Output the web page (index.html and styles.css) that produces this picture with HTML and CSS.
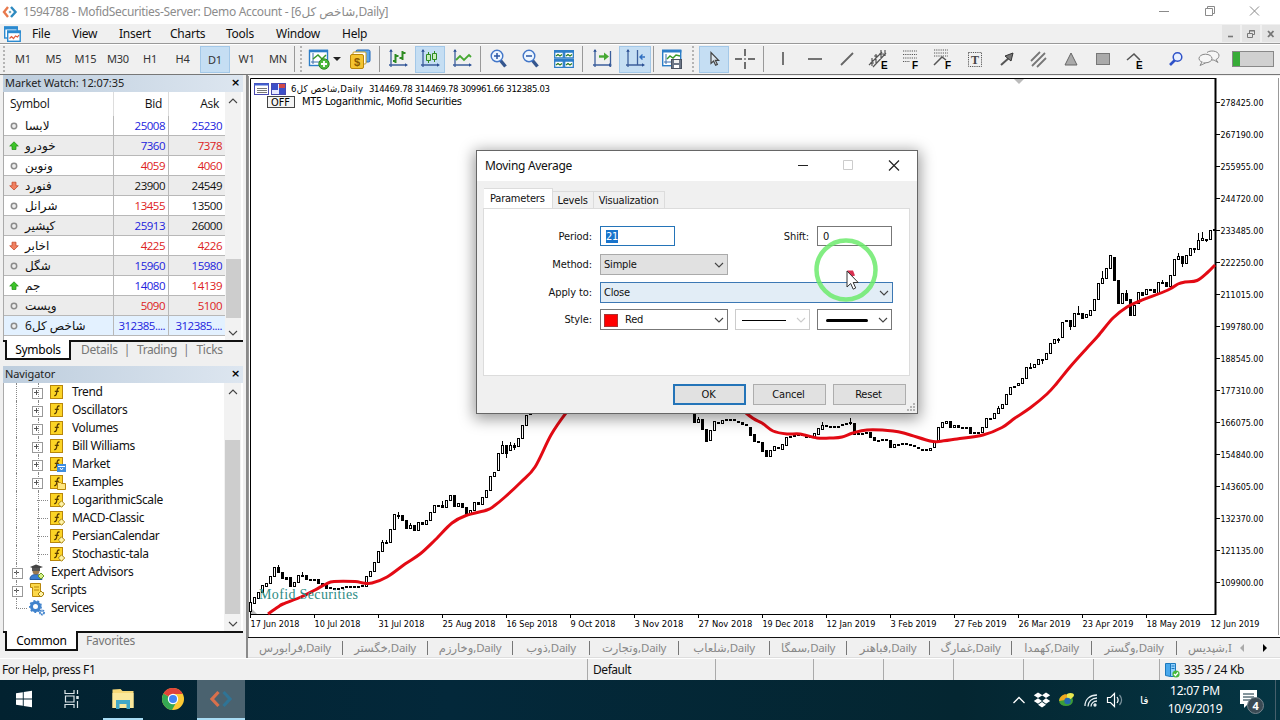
FILE: index.html
```html
<!DOCTYPE html>
<html lang="en">

<head>
    <meta charset="UTF-8">
    <meta name="viewport" content="width=device-width, initial-scale=1.0">
    <title>1594788 - MofidSecurities-Server: Demo Account</title>
    <link rel="stylesheet" href="styles.css">
</head>

<body>
    <!-- shared icons -->
    <svg class="defs" width="0" height="0">
        <symbol id="i-f" viewBox="0 0 16 16">
            <rect x=".5" y="1.5" width="12" height="13" fill="#fcd425" stroke="#b8860b"/>
            <path d="M9.6 4.2C7.6 3.4 7.3 5 7 7s-.5 5-2.8 4.6M4.8 7.3h4" fill="none" stroke="#5a3c00" stroke-width="1.3"/>
        </symbol>
        <symbol id="i-fd" viewBox="0 0 16 16">
            <use href="#i-f"/>
            <path d="M11.5 8.8l3.2 3.2-3.2 3.2L8.300 12z" fill="#fff3a8" stroke="#a88410"/>
        </symbol>
        <symbol id="i-chev" viewBox="0 0 10 10">
            <path d="M1 3l4 4 4-4" fill="none" stroke="currentColor" stroke-width="1.1"/>
        </symbol>
        <symbol id="i-none" viewBox="0 0 10 10">
            <circle cx="5" cy="5" r="2.700" fill="#eee" stroke="#8c8c8c" stroke-width="1.500"/>
        </symbol>
        <symbol id="i-up" viewBox="0 0 10 10">
            <path d="M5 .8L9.300 5H7v3.500H3V5H.7z" fill="#3cc428" stroke="#1c8a12" stroke-width=".7"/>
        </symbol>
        <symbol id="i-down" viewBox="0 0 10 10">
            <path d="M5 9L.7 4.800H3V1.200h4v3.600h2.300z" fill="#f08060" stroke="#c04020" stroke-width=".7"/>
        </symbol>
        <symbol id="i-axes" viewBox="0 0 20 20">
            <path d="M3 1v17M1 16h17" fill="none" stroke="#3c5f9c" stroke-width="1.300"/>
            <path d="M3 0l1.800 2.800H1.200zM20 16l-3 1.800v-3.600z" fill="#2a4f94"/>
        </symbol>
    </svg>

    <div class="titlebar">
        <svg class="logo" width="16" height="12" viewBox="0 0 16 12"><path d="M6 1L2 6l4 5" fill="none" stroke="#e8794c" stroke-width="2.400"/><path d="M9 1l4.500 5L9 11" fill="none" stroke="#2e8ac0" stroke-width="2.400"/><circle cx="8" cy="6" r="1.300" fill="#7ab"/></svg>
        <span class="caption">1594788 - MofidSecurities-Server: Demo Account - [شاخص کل6,Daily]</span>
        <svg class="winctl" width="114" height="16" viewBox="0 0 114 16" fill="none" stroke="#8a8a8a">
            <path d="M5 8.500h10M51.500 5.500h7v7h-7zM53.500 5.500v-2h7v7h-2M96 3.500l9 9M105 3.500l-9 9"/>
        </svg>
    </div>

    <div class="menubar">
        <svg width="17" height="16" viewBox="0 0 17 16"><rect x=".7" y="1" width="12.500" height="11" fill="#fff" stroke="#2b8ad0" stroke-width="1.400"/><path d="M0 2h14" stroke="#2b8ad0" stroke-width="3"/><rect x="3.700" y="5" width="12.500" height="10.300" fill="#fff" stroke="#2b8ad0" stroke-width="1.400"/><path d="M3 6h14" stroke="#2b8ad0" stroke-width="2.400"/><path d="M5.500 12.500l2-2 2 2 2-2.500 2 1 1.500-2" fill="none" stroke="#e05a3a" stroke-width="1.200"/></svg>
        <nav class="menu">
            <span class="m1">File</span><span class="m2">View</span><span class="m3">Insert</span><span class="m4">Charts</span><span class="m5">Tools</span><span class="m6">Window</span><span class="m7">Help</span>
        </nav>
        <div class="mdi">
            <span><svg width="10" height="10" viewBox="0 0 10 10"><path d="M2 7.500h5" stroke="#777" stroke-width="1.600"/></svg></span>
            <span><svg width="10" height="10" viewBox="0 0 10 10" fill="none" stroke="#777"><path d="M1.500 4.500h5v4h-5zM3.500 4V1.500h5v4H7M3 2h6"/></svg></span>
            <span><svg width="10" height="10" viewBox="0 0 10 10"><path d="M2 2l5.500 6M7.500 2L2 8" stroke="#777" stroke-width="1.800"/></svg></span>
        </div>
    </div>

    <div class="toolbar">
        <i class="grip g8"></i>
        <span class="tf w30">M1</span><span class="tf w31">M5</span><span class="tf w33">M15</span><span class="tf w32">M30</span><span class="tf w32">H1</span><span class="tf w33">H4</span><span class="tf w32"><b class="on">D1</b></span><span class="tf w31">W1</span><span class="tf w32">MN</span>
        <i class="sep s2"></i><i class="grip g10"></i>
        <span class="slot w26"><svg width="22" height="22" viewBox="0 0 22 22"><rect x="1.500" y="2.500" width="18" height="15" fill="#fff" stroke="#2c7ec8" stroke-width="1.400"/><path d="M1 3h19" stroke="#2c7ec8" stroke-width="2.600"/><path d="M5 5v11M3 14h14" stroke="#3c6fac"/><path d="M5 11l5-4 4 4 4-4" fill="none" stroke="#389a28" stroke-width="1.500"/><circle cx="16" cy="16" r="5.200" fill="#4cb83c" stroke="#2c8a20"/><path d="M16 13v6M13 16h6" stroke="#fff" stroke-width="1.800"/></svg></span>
        <span class="slot w10"><i class="caret"></i></span>
        <span class="slot w36"><svg width="22" height="22" viewBox="0 0 22 22"><rect x="7" y="2" width="14" height="12" rx="1.500" fill="#5ea6ec" stroke="#1f66b8"/><rect x="4" y="4" width="13" height="12" rx="1" fill="#fff" stroke="#c8a020"/><rect x="1.500" y="6.500" width="13" height="14" rx="1.500" fill="#f4c430" stroke="#b8860b"/><text x="8" y="18" text-anchor="middle" class="dollar">$</text></svg></span>
        <i class="sep s4"></i>
        <span class="slot w32"><svg width="20" height="20" viewBox="0 0 20 20"><use href="#i-axes"/><path d="M7.500 5v9M7.500 12H5M7.500 7h3M14.500 2v9M14.500 4h3M14.500 9h-3" stroke="#2e8b22" stroke-width="2" fill="none"/></svg></span>
        <span class="slot w32 on"><svg width="20" height="20" viewBox="0 0 20 20"><use href="#i-axes"/><path d="M8.500 3v11M14.500 2v11" stroke="#2e8b22"/><path d="M6.500 5.500h4v6h-4zM12.500 4.500h4v6h-4z" fill="#c6efb8" stroke="#2e8b22"/></svg></span>
        <span class="slot w32"><svg width="20" height="20" viewBox="0 0 20 20"><use href="#i-axes"/><path d="M4 11l4-4 4 4 5-5 2 2" fill="none" stroke="#46a832" stroke-width="1.800"/></svg></span>
        <i class="sep s5"></i>
        <span class="slot w32"><svg width="20" height="20" viewBox="0 0 20 20"><path d="M11.500 11.500l5 6" stroke="#35568e" stroke-width="3.400"/><circle cx="8" cy="7" r="5.800" fill="#edf6ff" stroke="#4276c8" stroke-width="1.400"/><path d="M8 4v6M5 7h6" stroke="#2a56a4" stroke-width="1.500"/></svg></span>
        <span class="slot w32"><svg width="20" height="20" viewBox="0 0 20 20"><path d="M11.500 11.500l5 6" stroke="#35568e" stroke-width="3.400"/><circle cx="8" cy="7" r="5.800" fill="#edf6ff" stroke="#4276c8" stroke-width="1.400"/><path d="M5 7h6" stroke="#2a56a4" stroke-width="1.500"/></svg></span>
        <span class="slot w33"><svg width="20" height="20" viewBox="0 0 20 20" fill="#fff" stroke="#2c7ec8" stroke-width="1.300"><path d="M.7 1.700h8.600v7.300H.7zM10.700 1.700h8.600v7.300h-8.600zM.7 10.700h8.600v7.600H.7zM10.700 10.700h8.600v7.600h-8.600z"/><path d="M0 2.500h20M0 11.500h20" stroke-width="2.600"/><path d="M2 7l2-1.500L6 7l2-1.500M12 7l2-1.500L16 7l2-1.500M2 16l2-1.500L6 16l2-1.500M12 16l2-1.500 2 1.500 2-1.500" fill="none" stroke="#287a20" stroke-width="1.200"/></svg></span>
        <i class="sep s6"></i>
        <span class="slot w32"><svg width="20" height="20" viewBox="0 0 20 20"><use href="#i-axes"/><path d="M18.500 2v16" stroke="#3c5f9c" stroke-width="1.300"/><path d="M7 7.500h5" stroke="#46a832" stroke-width="2.400"/><path d="M12 3.500l5 4-5 4z" fill="#46a832"/></svg></span>
        <span class="slot w34 on"><svg width="20" height="20" viewBox="0 0 20 20"><use href="#i-axes"/><path d="M12.500 1v15" stroke="#3c5f9c" stroke-width="1.300"/><path d="M20 8h-5M17.500 5.500L15 8l2.500 2.500" fill="none" stroke="#2f6fc0" stroke-width="1.400"/></svg></span>
        <i class="sep s4"></i>
        <span class="slot w32"><svg width="20" height="20" viewBox="0 0 20 20"><rect x=".7" y="1.700" width="18" height="15" fill="#fff" stroke="#2c7ec8" stroke-width="1.400"/><path d="M0 2h19.400" stroke="#2c7ec8" stroke-width="3"/><path d="M4 5v10M2 13h12" stroke="#3c6fac"/><path d="M5 10l3-3 3 2 3-3 4 1" fill="none" stroke="#389a28" stroke-width="1.400"/><rect x="9.500" y="10.500" width="10" height="9" fill="#6c7686" stroke="#4a5260"/><path d="M12 11h5v3h-5z" fill="#f0f0f0"/><path d="M12 16h5v3h-5z" fill="#fff"/></svg></span>
        <i class="grip g10"></i>
        <span class="slot w32 on"><svg width="20" height="20" viewBox="0 0 20 20"><path d="M7 3.500v11l2.600-2.400 2 4.200 1.800-.9-2-4h3.200z" fill="#dce6ee" stroke="#444" stroke-width="1.200"/></svg></span>
        <span class="slot w30"><svg width="20" height="20" viewBox="0 0 20 20"><path d="M10 0v7M10 13v7M0 10h7M13 10h7M9.300 10h1.400" stroke="#444" stroke-width="1.500"/></svg></span>
        <i class="sep s7"></i>
        <span class="slot w32"><svg width="20" height="20" viewBox="0 0 20 20"><path d="M10 3v13" stroke="#555" stroke-width="1.600"/></svg></span>
        <span class="slot w32"><svg width="20" height="20" viewBox="0 0 20 20"><path d="M3 10h14" stroke="#555" stroke-width="1.600"/></svg></span>
        <span class="slot w32"><svg width="20" height="20" viewBox="0 0 20 20"><path d="M4 16L16 4" stroke="#666" stroke-width="1.800"/></svg></span>
        <span class="slot w32"><svg width="22" height="22" viewBox="0 0 22 22"><path d="M1 17L14 4M5 19L18 5M4 10v8M2 15h4M8 6v9M6 8h4M13 2v9M11 6h5M17 2v6" stroke="#555" stroke-width="1.200" fill="none"/><text x="13" y="21" class="tag">E</text></svg></span>
        <span class="slot w32"><svg width="22" height="22" viewBox="0 0 22 22"><path d="M3 3h14M3 6.500h14M3 10h14M3 13.500h7" stroke="#555" stroke-dasharray="1.200 1" fill="none"/><text x="12" y="21" class="tag">F</text></svg></span>
        <span class="slot w32"><svg width="22" height="22" viewBox="0 0 22 22"><path d="M2 2h14M2 5h14M2 8h14" stroke="#555" stroke-dasharray="1.200 1"/><path d="M2 17l8-8 4 3" fill="none" stroke="#555" stroke-width="1.500"/><text x="13" y="21" class="tag">F</text></svg></span>
        <span class="slot w32"><svg width="20" height="20" viewBox="0 0 20 20"><rect x="3.500" y="3.500" width="13" height="14" fill="none" stroke="#555" stroke-dasharray="1.200 1"/><text x="10" y="15" text-anchor="middle" class="tee">T</text></svg></span>
        <span class="slot w32"><svg width="20" height="20" viewBox="0 0 20 20"><path d="M4 16L13 8" stroke="#555" stroke-width="2"/><path d="M16 4l-2 8-6-5z" fill="#777" stroke="#333"/></svg></span>
        <span class="slot w32"><svg width="20" height="20" viewBox="0 0 20 20"><path d="M2 12L11 3M3 17L16 4M8 18l9-9" stroke="#777" stroke-width="1.800"/></svg></span>
        <span class="slot w32"><svg width="20" height="20" viewBox="0 0 20 20"><path d="M10 4l6 12H4z" fill="#aaa" stroke="#666"/></svg></span>
        <span class="slot w32"><svg width="20" height="20" viewBox="0 0 20 20"><rect x="3.500" y="4.500" width="13" height="11" fill="#aaa" stroke="#777"/></svg></span>
        <span class="slot w32"><svg width="22" height="22" viewBox="0 0 22 22"><path d="M3 12l7-6 6 6" fill="none" stroke="#555" stroke-width="1.600"/><text x="12" y="21" class="tag">E</text></svg></span>
        <span class="slot find"><svg width="20" height="20" viewBox="0 0 20 20"><path d="M4 16l5-5" stroke="#2f52c8" stroke-width="2.600"/><circle cx="11.500" cy="8" r="4.300" fill="#e8f0ff" stroke="#2f52c8" stroke-width="1.500"/></svg></span>
        <span class="slot w34"><svg width="22" height="18" viewBox="0 0 22 18" fill="#f6f6f6" stroke="#888"><path d="M9 2.500c3-2.500 11-2 12 2.500 0 2-1 4-3 4.500l2 3-4-2.500H11"/><ellipse cx="7.500" cy="8.500" rx="6.500" ry="4.300"/><path d="M4 12l-2 3.500L7.500 13"/></svg></span>
        <div class="meter"><i></i></div>
    </div>

    <div class="work">
        <aside class="side">
            <section class="panel watch">
                <header><span>Market Watch: 12:07:35</span><b>×</b></header>
                <div class="panel-body">
                    <table class="quotes">
                        <thead><tr><th class="sym">Symbol</th><th>Bid</th><th>Ask</th></tr></thead>
                        <tbody>
                            <tr><td><svg><use href="#i-none"/></svg><span>لابسا</span></td><td class="up">25008</td><td class="up">25230</td></tr>
                            <tr><td><svg><use href="#i-up"/></svg><span>خودرو</span></td><td class="up">7360</td><td class="dn">7378</td></tr>
                            <tr><td><svg><use href="#i-none"/></svg><span>ونوین</span></td><td class="dn">4059</td><td class="dn">4060</td></tr>
                            <tr><td><svg><use href="#i-down"/></svg><span>فنورد</span></td><td>23900</td><td>24549</td></tr>
                            <tr><td><svg><use href="#i-none"/></svg><span>شرانل</span></td><td class="dn">13455</td><td>13500</td></tr>
                            <tr><td><svg><use href="#i-none"/></svg><span>کپشیر</span></td><td class="up">25913</td><td>26000</td></tr>
                            <tr><td><svg><use href="#i-down"/></svg><span>اخابر</span></td><td class="dn">4225</td><td class="dn">4226</td></tr>
                            <tr><td><svg><use href="#i-none"/></svg><span>شگل</span></td><td class="up">15960</td><td class="up">15980</td></tr>
                            <tr><td><svg><use href="#i-up"/></svg><span>جم</span></td><td class="up">14080</td><td class="dn">14139</td></tr>
                            <tr><td><svg><use href="#i-none"/></svg><span>وپست</span></td><td class="dn">5090</td><td class="dn">5100</td></tr>
                            <tr class="sel"><td><svg><use href="#i-none"/></svg><span>شاخص کل6</span></td><td class="up">312385....</td><td class="up">312385....</td></tr>
                        </tbody>
                    </table>
                    <div class="scroll s-watch"><svg class="flip"><use href="#i-chev"/></svg><i></i><svg><use href="#i-chev"/></svg></div>
                </div>
                <div class="tabs"><span class="cur">Symbols</span><span class="t1">Details</span><span class="bar">Trading</span><span class="bar">Ticks</span></div>
            </section>

            <section class="panel nav">
                <header><span>Navigator</span><b>×</b></header>
                <div class="panel-body">
                    <ul class="tree">
                        <li class="kid plus"><svg><use href="#i-f"/></svg>Trend</li>
                        <li class="kid plus"><svg><use href="#i-f"/></svg>Oscillators</li>
                        <li class="kid plus"><svg><use href="#i-f"/></svg>Volumes</li>
                        <li class="kid plus"><svg><use href="#i-f"/></svg>Bill Williams</li>
                        <li class="kid plus"><svg viewBox="0 0 16 16"><use href="#i-f"/><path d="M7 8h9v8H7z" fill="#3f8ee0"/><path d="M8 10.500h7M10 12l1.500 2 1.500-2" fill="none" stroke="#fff"/></svg>Market</li>
                        <li class="kid plus"><svg viewBox="0 0 16 16"><use href="#i-f"/><path d="M7.500 8.500h3l1 1h4v6h-8z" fill="#ffe680" stroke="#b8860b"/></svg>Examples</li>
                        <li class="kid"><svg><use href="#i-fd"/></svg>LogarithmicScale</li>
                        <li class="kid"><svg><use href="#i-fd"/></svg>MACD-Classic</li>
                        <li class="kid"><svg><use href="#i-fd"/></svg>PersianCalendar</li>
                        <li class="kid last"><svg><use href="#i-fd"/></svg>Stochastic-tala</li>
                        <li class="top plus"><svg viewBox="0 0 16 16"><path d="M1 15.500c0-4 3-5 6-5s6 1 6 5z" fill="#3a7cd0" stroke="#245a9c"/><circle cx="7" cy="7" r="3.500" fill="#9a7a50"/><path d="M7 .5l7 2.500-7 2.500L1 3z" fill="#444"/><path d="M3 4h8v3H3z" fill="#555"/><path d="M12 9l3 3-3 3-3-3z" fill="#d8f088" stroke="#6a9a20"/></svg>Expert Advisors</li>
                        <li class="top plus"><svg viewBox="0 0 16 16"><path d="M1.500 1.500h10v9h3c0 3-1 4-3 4h-8v-9h-2z" fill="#fcd84a" stroke="#b8860b"/><path d="M5 5h5M5 8h5" stroke="#b8860b"/><path d="M12 9l3 3-3 3-3-3z" fill="#fff3a8" stroke="#a88410"/></svg>Scripts</li>
                        <li class="top last"><svg viewBox="0 0 16 16"><circle cx="6.500" cy="6.500" r="4" fill="none" stroke="#3f82cc" stroke-width="3"/><circle cx="6.500" cy="6.500" r="5.700" fill="none" stroke="#3f82cc" stroke-width="1.500" stroke-dasharray="2 2"/><circle cx="13" cy="12.500" r="2" fill="none" stroke="#3f82cc" stroke-width="2" stroke-dasharray="1.600 .6"/></svg>Services</li>
                    </ul>
                    <div class="scroll s-nav"><svg class="flip"><use href="#i-chev"/></svg><i></i><svg><use href="#i-chev"/></svg></div>
                </div>
                <div class="tabs"><span class="cur wide">Common</span><span class="t2">Favorites</span></div>
            </section>
        </aside>

        <main class="main">
            <svg id="chart" width="1032" height="561" viewBox="248 76 1032 561">
                <rect x="248" y="76" width="1032" height="561" fill="#fff"/>
                <path d="M248.500 76v561M1278.500 78v557" stroke="#999"/>
                <path d="M250.500 614V78.500H1216M250 614.500h966" fill="none" stroke="#000"/>
                <path d="M1215.500 78v537" stroke="#000" stroke-width="2"/>
                <path d="M1014 79h10l-5 5z" fill="#bbb"/>
                <path d="M251 608l6 6h-6z" fill="#bbb"/>
                <g id="candles"></g>
                <path id="average" fill="none" stroke="#e30a14" stroke-width="3"/>
                <text class="brand" x="259" y="599" textLength="99">Mofid Securities</text>
                <g id="axis"></g>
                <g>
                    <rect x="254.500" y="83.500" width="14" height="11" fill="#fff" stroke="#4848b0"/>
                    <path d="M254 84.500h15" stroke="#4060d0" stroke-width="2"/>
                    <path d="M257 88.500h10M257 90.500h10M257 92.500h10" stroke="#777"/>
                    <rect x="271.500" y="83.500" width="14" height="11" fill="#e8e8ff" stroke="#4848b0"/>
                    <path d="M272 84h6v6h-6zM279 88h6v6h-6z" fill="#3c50c8"/>
                    <path d="M279 84h6v4h-6z" fill="#d04848"/>
                </g>
                <text class="ohlc" x="291" y="92" textLength="72">شاخص کل6,Daily</text>
                <text class="ohlc" x="369" y="92" textLength="181">314469.78 314469.78 309961.66 312385.03</text>
                <rect x="267.500" y="96.500" width="27" height="11" fill="#f4f4f4" stroke="#444"/>
                <text class="note" x="271" y="106" textLength="19" lengthAdjust="spacingAndGlyphs">OFF</text>
                <text class="note" x="302" y="105" textLength="160">MT5 Logarithmic, Mofid Securities</text>
            </svg>
            <div class="doctabs">
                <span class="d1">فرابورس,Daily</span><span class="d2">خگستر,Daily</span><span class="d3">وخارزم,Daily</span><span class="d4">ذوب,Daily</span><span class="d5">وتجارت,Daily</span><span class="d6">شلعاب,Daily</span><span class="d7">سمگا,Daily</span><span class="d8">فباهنر,Daily</span><span class="d9">غمارگ,Daily</span><span class="d10">کهمدا,Daily</span><span class="d11">وگستر,Daily</span><span class="d12">شپدیس,I</span>
                <i class="arr off"></i><i class="arr"></i>
            </div>
        </main>
    </div>

    <div class="statusbar">
        <span class="help">For Help, press F1</span><span class="profile">Default</span><span class="c1"></span><span class="c2"></span><span class="c2"></span><span class="c2"></span><span class="c2"></span><span class="c3"></span>
        <span class="net"><svg width="16" height="16" viewBox="0 0 16 16"><path d="M1.500 1.500h5v13l-5-1z" fill="#48a8ec" stroke="#1c78bc"/><path d="M6.500 1.500h5v13h-5z" fill="#8fd0ff" stroke="#1c78bc"/><path d="M7.500 4h3M7.500 6.500h3" stroke="#1c78bc"/><circle cx="12" cy="12" r="3.600" fill="#48b83c"/><path d="M10 12l1.500 1.500 2.500-3" fill="none" stroke="#fff" stroke-width="1.200"/></svg>335 / 24 Kb</span>
    </div>

    <div class="taskbar">
        <span class="app"><svg width="18" height="18" viewBox="0 0 18 18" fill="#fff"><path d="M1 3.200l6.800-1v6.300H1zM8.700 2L17 .8v7.700H8.700zM1 9.500h6.800v6.300L1 14.800zM8.700 9.500H17v7.700L8.700 16z"/></svg></span>
        <span class="app"><svg width="18" height="18" viewBox="0 0 18 18" fill="none" stroke="#dde6ea" stroke-width="1.200"><path d="M2 0v3.500h9V0M2 18v-3.500h9V18M2.500 6h8.500v6H2.500zM14.500 0v4M14.500 11v7"/><path d="M14.500 6v3" stroke-width="2.500"/></svg></span>
        <span class="app run"><svg width="24" height="24" viewBox="0 0 24 24"><path d="M1.500 2.500l8-.5 2 2h11v17h-21z" fill="#f6d878"/><path d="M1.500 6h21v15h-21z" fill="#fbe89c"/><path d="M5 13h14v9h-3.500v-5h-7v5H5z" fill="#42a8c8"/></svg></span>
        <span class="app"><svg width="24" height="24" viewBox="0 0 24 24"><circle cx="12" cy="12" r="11" fill="#fcc934"/><path d="M12 12L2.500 6.500A11 11 0 0 0 11 23l5-9z" fill="#34a853"/><path d="M12 12L2.500 6.500A11 11 0 0 1 21.700 7H12z" fill="#e0443a"/><circle cx="12" cy="12" r="5.200" fill="#fff"/><circle cx="12" cy="12" r="4" fill="#4285f4"/></svg></span>
        <span class="app active"><svg width="24" height="18" viewBox="0 0 24 18" fill="none" stroke-width="3.200"><path d="M9.500 2L3 9l6.500 7" stroke="#d8704c"/><path d="M14.500 2L21 9l-6.500 7" stroke="#2f7496"/></svg></span>
        <div class="tray">
            <svg width="14" height="10" viewBox="0 0 14 10"><path d="M1.500 8L7 2.500 12.500 8" fill="none" stroke="#fff" stroke-width="1.300"/></svg>
            <svg width="18" height="16" viewBox="0 0 18 16" fill="#fff"><path d="M5 .5L9.500 3.300 5 6 .8 3.300zM13 .5l4.200 2.800L13 6 9 3.300zM5 6.300L9 9l-4 2.800L.8 9zM13 6.300L17.200 9 13 11.800 9.200 9zM9 10l4 2.800L9 15.500l-4-2.700z"/></svg>
            <svg width="18" height="16" viewBox="0 0 18 16"><ellipse cx="8" cy="8.500" rx="7" ry="5.500" fill="#3c9c38"/><path d="M1 9c1-6 6-8 10-6L7 8z" fill="#f0a820"/><path d="M9 2c3-2 7-1 7 1s-4 5-7 5z" fill="#e8e850"/><circle cx="9.500" cy="9" r="3.200" fill="#2468b0"/></svg>
            <svg width="16" height="16" viewBox="0 0 16 16" fill="none" stroke="#e6eef2" stroke-width="1.300"><path d="M2 14C2 7 7 3 14 3M5 14.500c0-5 4-8.500 9-8.500M8 14.500c0-3 2.500-5.500 6-5.500"/><circle cx="12" cy="13" r="1" fill="#fff"/></svg>
            <svg width="18" height="16" viewBox="0 0 18 16" fill="none" stroke="#fff" stroke-width="1.200"><path d="M1.500 5.500h3l4-4v13l-4-4h-3z"/><path d="M11 5c1.500 2 1.500 4 0 6"/><path d="M13.500 3c2.500 3 2.500 7 0 10" stroke="#7c929c"/></svg>
            <span class="lang">فا</span>
            <span class="clock">12:07 PM<br>10/9/2019</span>
            <svg class="notes" width="28" height="28" viewBox="0 0 28 28"><path d="M3 4h17v14h-9l-4 4v-4H3z" fill="#fff"/><path d="M6 8h11M6 11h11M6 14h7" stroke="#0a2a38"/><circle cx="18.500" cy="19.500" r="8" fill="#3a4a54" stroke="#76858e"/><text x="18.500" y="24" text-anchor="middle" class="badge">4</text></svg>
            <i class="peek"></i>
        </div>
    </div>

    <div class="dialog">
        <div class="dlg-title"><span>Moving Average</span>
            <svg width="114" height="16" viewBox="0 0 114 16" fill="none"><path d="M2 7.500h10M93 2.500l10 10M103 2.500l-10 10" stroke="#222" stroke-width="1.200"/><path d="M47.500 2.500h9v9h-9z" stroke="#ccc"/></svg>
        </div>
        <div class="dlg-tabs"><span class="cur">Parameters</span><span>Levels</span><span>Visualization</span></div>
        <div class="page">
            <div class="row r1"><label>Period:</label><div class="input focus"><mark>21</mark></div><label class="shift">Shift:</label><div class="input">0</div></div>
            <div class="row r2"><label>Method:</label><div class="combo gray w127">Simple<svg><use href="#i-chev"/></svg></div></div>
            <div class="row r3"><label>Apply to:</label><div class="combo hot">Close<svg><use href="#i-chev"/></svg></div></div>
            <div class="row r4"><label>Style:</label><div class="combo w127"><i class="swatch"></i>Red<svg><use href="#i-chev"/></svg></div><div class="combo dim w75"><i class="line"></i><svg><use href="#i-chev"/></svg></div><div class="combo w75 end"><i class="line fat"></i><svg><use href="#i-chev"/></svg></div></div>
        </div>
        <div class="dlg-btns"><span class="ok">OK</span><span>Cancel</span><span>Reset</span></div>
        <svg class="sizer" width="9" height="9" viewBox="0 0 9 9"><path d="M6 1h2M3 4h2M6 4h2M0 7h2M3 7h2M6 7h2" stroke="#b4b4b4" stroke-width="2"/></svg>
    </div>

    <svg class="pointer" width="66" height="66" viewBox="0 0 66 66">
        <circle cx="33" cy="33" r="29.500" fill="none" stroke="#6cea6c" stroke-opacity=".85" stroke-width="4.500"/>
        <path d="M34 33.500h6l2 5-3 1z" fill="#d83050"/>
        <path d="M34 34v16l3.700-3.500 2.500 5.700 2.500-1.200-2.500-5.500h5z" fill="#fff" stroke="#333"/>
    </svg>

    <script src="script.js"></script>
</body>

</html>
```

FILE: styles.css
```css
* {
    box-sizing: border-box;
}

body {
    margin: 0;
    width: 1280px;
    height: 720px;
    overflow: hidden;
    background: #f0f0f0;
    color: #111;
    font: 12px/16px "Noto Sans", "DejaVu Sans", sans-serif;
    letter-spacing: -0.25px;
}

svg {
    display: block;
    flex: none;
}

.defs {
    position: absolute;
}

/* title bar and menu */
.titlebar {
    display: flex;
    align-items: center;
    height: 24px;
    padding: 0 12px 0 2px;
    background: #fff;
    color: #8c8c8c;
}

.caption {
    margin-left: 5px;
    letter-spacing: -0.34px;
    white-space: nowrap;
}

.winctl {
    margin-left: auto;
    margin-top: -3px;
}

.menubar {
    display: flex;
    align-items: center;
    height: 19px;
    padding-left: 4px;
}

.menu {
    display: flex;
    padding-left: 11px;
}

.m1 { width: 40px; }
.m2 { width: 47px; }
.m3 { width: 51px; }
.m4 { width: 56px; }
.m5 { width: 50px; }
.m6 { width: 66px; }

.mdi {
    display: flex;
    gap: 2px;
    margin-left: auto;
}

.mdi span {
    display: flex;
    align-items: center;
    justify-content: center;
    width: 18px;
    height: 17px;
    background: #e4e4e4;
}

/* toolbar */
.toolbar {
    display: flex;
    align-items: center;
    height: 32px;
    border-top: 1px solid #999;
    border-bottom: 1px solid #777;
    box-shadow: inset 0 1px #fff;
}

.grip,
.sep {
    flex: none;
    height: 26px;
}

.grip {
    background: linear-gradient(90deg, transparent calc(50% - 1px), #b4b4b4 calc(50% - 1px), #b4b4b4 calc(50% + 1px), transparent calc(50% + 1px));
    -webkit-mask: repeating-linear-gradient(#000 0 2px, transparent 2px 4px);
}

.sep {
    background: linear-gradient(90deg, transparent calc(50% - .5px), #999 calc(50% - .5px), #999 calc(50% + .5px), transparent calc(50% + .5px));
}

.g8 { width: 8px; }
.g10 { width: 10px; }
.s2 { width: 2px; }
.s4 { width: 4px; }
.s5 { width: 5px; }
.s6 { width: 6px; }
.s7 { width: 7px; }

.tf,
.slot {
    display: flex;
    flex: none;
    align-items: center;
    justify-content: center;
    height: 27px;
}

.tf {
    font-size: 11px;
    color: #333;
}

.tf b {
    width: 30px;
    font-weight: normal;
    line-height: 25px;
    text-align: center;
}

.tf .on,
.slot.on {
    background: #c5def3;
    border: 1px solid #a3c8e8;
}

.slot.on {
    margin: 0 1px;
}

.w10 { width: 10px; }
.w26 { width: 26px; }
.w30 { width: 30px; }
.w31 { width: 31px; }
.w32 { width: 32px; }
.w33 { width: 33px; }
.w34 { width: 34px; }
.w36 { width: 36px; }
.w32.on { width: 30px; }
.w34.on { width: 32px; }

.find {
    width: 32px;
    margin-left: 9px;
}

.caret {
    border: 4px solid transparent;
    border-top-color: #222;
    border-bottom: 0;
}

.dollar {
    font: bold 11px "Liberation Sans", sans-serif;
    fill: #8a5a00;
}

.tag {
    font: bold 10px "Liberation Sans", sans-serif;
}

.tee {
    font: bold 12px "Liberation Serif", serif;
    fill: #444;
}

.meter {
    width: 42px;
    height: 16px;
    margin-left: 6px;
    border: 1px solid #888;
    background: #d0d0d0;
}

.meter i {
    display: block;
    width: 7px;
    height: 100%;
    background: #38ac38;
}

/* side panels */
.work {
    display: flex;
    height: 583px;
}

.side {
    width: 248px;
    padding: 0 3px 0 3px;
    border-right: 2px solid #8a8a8a;
}

.panel header {
    display: flex;
    align-items: center;
    justify-content: space-between;
    height: 17px;
    padding: 0 3px 1px 2px;
    background: linear-gradient(90deg, #bdcddd, #dde6f0);
    font-size: 11px;
    letter-spacing: -0.1px;
    color: #222;
}

.panel header b {
    font: bold 11px/12px "DejaVu Sans", sans-serif;
    color: #000;
}

.panel-body {
    display: flex;
    justify-content: space-between;
    height: 248px;
    border-left: 1px solid #aaa;
    background: #fff;
}

.nav {
    margin-top: 7px;
}

.quotes,
.quotes thead,
.quotes tbody {
    display: block;
    width: 221px;
}

.quotes {
    font-family: "Open Sans", "DejaVu Sans", sans-serif;
    letter-spacing: -0.3px;
}

.quotes tr {
    display: grid;
    grid-template-columns: 110px 55px 56px;
    height: 20px;
}

.quotes thead tr {
    height: 24px;
}

.quotes th {
    padding: 0 6px 0 0;
    border-right: 1px solid #ddd;
    font-weight: normal;
    line-height: 24px;
    text-align: right;
}

.quotes .sym {
    padding-left: 6px;
    text-align: left;
}

.quotes td {
    height: 20px;
    padding: 0 3px 0 0;
    border-right: 1px solid #b8b8b8;
    border-bottom: 1px solid #b8b8b8;
    font-size: 11.5px;
    letter-spacing: -0.5px;
    line-height: 19px;
    text-align: right;
}

.quotes th:last-child,
.quotes td:last-child {
    border-right: 0;
}

.quotes td:first-child {
    display: flex;
    align-items: center;
    padding-left: 5px;
    font-size: 12px;
    letter-spacing: 0;
}

.quotes td svg {
    width: 10px;
    height: 10px;
    margin-right: 6px;
}

.quotes tbody tr:nth-child(even) {
    background: #ececec;
}

.quotes .sel {
    background: #e3f1ff;
}

.up { color: #2222dd; }
.dn { color: #dd2222; }

.scroll {
    display: flex;
    flex-direction: column;
    align-items: center;
    width: 17px;
    margin-right: 2px;
    padding: 4px 0 2px;
    background: #f2f2f2;
    color: #444;
}

.scroll svg {
    width: 10px;
    height: 10px;
}

.scroll i {
    width: 15px;
    background: #cdcdcd;
}

.flip {
    transform: scaleY(-1);
}

.s-watch i {
    height: 59px;
    margin: 153px 0 auto;
}

.s-nav i {
    height: 174px;
    margin: 43px 0 auto;
}

.tabs {
    display: flex;
    height: 19px;
    border-top: 2px solid #111;
    color: #777;
    line-height: 16px;
}

.tabs span {
    flex: none;
    white-space: nowrap;
}

.tabs .cur {
    width: 66px;
    height: 20px;
    margin: -2px 0 0 2px;
    border: 2px solid #111;
    border-top: 0;
    background: #fff;
    color: #000;
    line-height: 20px;
    text-align: center;
}

.tabs .cur.wide {
    width: 73px;
}

.t1 { margin-left: 10px; }
.t2 { margin-left: 8px; }

.t1 + .bar {
    letter-spacing: -0.4px;
}

.bar::before {
    content: "|";
    margin: 0 7px 0 6px;
}

.tree {
    margin: 0;
    padding: 0;
    width: 215px;
    list-style: none;
    letter-spacing: -0.35px;
}

.tree li {
    display: flex;
    align-items: center;
    height: 18px;
    position: relative;
    white-space: nowrap;
}

.tree svg {
    width: 16px;
    height: 16px;
    margin-right: 6px;
}

.kid { padding-left: 46px; }
.top { padding-left: 25px; }

/* dotted connectors of the tree */
.kid::before,
.top::before {
    content: "";
    position: absolute;
    left: 12px;
    top: 0;
    width: 21px;
    height: 18px;
    border-left: 1px dotted #888;
    border-right: 1px dotted #888;
}

.kid::after,
.top::after {
    content: "";
    position: absolute;
    left: 33px;
    top: 9px;
    width: 11px;
    border-top: 1px dotted #888;
}

.top::before {
    border-right: 0;
}

.top::after {
    left: 12px;
}

.top.last::before {
    height: 9px;
}

.tree .plus {
    background: linear-gradient(#555, #555) 30px 9px / 5px 1px no-repeat, linear-gradient(#555, #555) 32px 7px / 1px 5px no-repeat;
}

.plus::after {
    left: 28px;
    top: 5px;
    width: 9px;
    height: 9px;
    border: 1px solid #999;
}

.tree .top.plus {
    background-position: 10px 9px, 12px 7px;
}

.top.plus::after {
    left: 8px;
}

/* chart */
.main {
    width: 1032px;
    padding-top: 1px;
}

.ax,
.ohlc {
    font: 9.5px "DejaVu Sans Condensed", "DejaVu Sans", sans-serif;
    letter-spacing: 0;
}

.note {
    font: 11px "DejaVu Sans Condensed", "DejaVu Sans", sans-serif;
    letter-spacing: 0;
}

.brand {
    font: 14px "Liberation Serif", serif;
    letter-spacing: 0;
    fill: #2c8c84;
}

.doctabs {
    display: flex;
    align-items: center;
    height: 21px;
    border-top: 1px solid #111;
    border-bottom: 1px solid #ddd;
    color: #888;
    font-size: 11.5px;
    letter-spacing: -0.35px;
    white-space: nowrap;
}

.doctabs span {
    flex: none;
    height: 14px;
    border-right: 1px solid #777;
    line-height: 14px;
    text-align: center;
}

.d1 { width: 95px; }
.d2 { width: 85px; }
.d3 { width: 85px; }
.d4 { width: 77px; }
.d5 { width: 89px; }
.d6 { width: 91px; }
.d7 { width: 77px; }
.d8 { width: 83px; }
.d9 { width: 82px; }
.d10 { width: 80px; }
.d11 { width: 85px; }

.doctabs .d12 {
    width: 54px;
    padding-left: 11px;
    border: 0;
    text-align: left;
}

.arr {
    margin-left: 19px;
    border: 4px solid transparent;
    border-left-color: #000;
    border-right: 0;
}

.arr.off {
    margin-left: 9px;
    border-left: 0;
    border-right: 4px solid #aaa;
}

/* status bar */
.statusbar {
    display: flex;
    align-items: center;
    height: 22px;
    border-top: 1px solid #fff;
}

.statusbar span {
    flex: none;
    height: 21px;
    line-height: 22px;
    border-right: 1px solid #aaa;
}

.statusbar .help {
    width: 588px;
    padding-left: 2px;
    letter-spacing: -0.4px;
}

.profile {
    width: 128px;
    padding-left: 5px;
    letter-spacing: -0.45px;
}

.c1 { width: 98px; }
.c2 { width: 70px; }
.c3 { width: 66px; }

.statusbar .net {
    display: flex;
    align-items: center;
    gap: 4px;
    padding-left: 4px;
    border: 0;
}

/* taskbar */
.taskbar {
    display: flex;
    height: 40px;
    background: linear-gradient(90deg, #022230, #03283a 35%, #042631 75%, #053543);
}

.app {
    display: flex;
    align-items: center;
    justify-content: center;
    width: 48px;
    border-bottom: 2px solid transparent;
}

.run {
    position: relative;
    width: 53px;
}

.run::after {
    content: "";
    position: absolute;
    bottom: -2px;
    width: 40px;
    height: 2px;
    background: #a8dcf4;
}

.active {
    background: #4a626f;
    border-color: #a8dcf4;
}

.tray {
    display: flex;
    align-items: center;
    margin-left: auto;
    color: #fff;
}

.tray svg {
    margin-right: 7px;
}

.lang {
    width: 27px;
    margin-left: 3px;
    padding-left: 6px;
    font-size: 11px;
}

.clock {
    width: 66px;
    margin: 0 9px 0 1px;
    line-height: 18px;
    text-align: center;
}

.tray .notes {
    margin-right: 10px;
}

.badge {
    font: bold 11px "Noto Sans", sans-serif;
    fill: #fff;
}

.peek {
    width: 5px;
    height: 40px;
    border-left: 1px solid #46606c;
}

/* indicator settings window */
.dialog {
    position: absolute;
    left: 476px;
    top: 150px;
    width: 442px;
    height: 264px;
    border: 1px solid #666;
    background: #f0f0f0;
    box-shadow: 0 3px 14px 2px rgba(0, 0, 0, .4);
    font: 11px/14px "DejaVu Sans Condensed", "DejaVu Sans", sans-serif;
    letter-spacing: -0.2px;
}

.dlg-title {
    display: flex;
    align-items: center;
    justify-content: space-between;
    height: 30px;
    padding: 0 7px 0 8px;
    background: #fff;
    font: 12px/16px "Noto Sans", sans-serif;
    letter-spacing: -0.3px;
}

.dlg-tabs {
    display: flex;
    align-items: flex-end;
    height: 27px;
    padding-left: 7px;
}

.dlg-tabs span {
    height: 17px;
    padding: 2px 5px 0;
    border: 1px solid #dcdcdc;
    border-left: 0;
    border-bottom: 0;
    white-space: nowrap;
}

.dlg-tabs .cur {
    height: 20px;
    padding: 3px 7px 0 6px;
    background: #fff;
}

.page {
    width: 427px;
    height: 168px;
    margin-left: 6px;
    padding-top: 17px;
    border: 1px solid #dcdcdc;
    background: #fff;
}

.row {
    display: flex;
    align-items: center;
    height: 21px;
    margin-bottom: 7px;
}

.row label {
    width: 108px;
    margin-right: 8px;
    letter-spacing: -0.1px;
    text-align: right;
}

.r1 { height: 20px; margin-bottom: 8px; }
.r3 { margin-bottom: 6px; }

.r1 label {
    padding-top: 2px;
}

.row .shift {
    width: 134px;
}

.input {
    width: 75px;
    height: 20px;
    padding: 3px 5px;
    border: 1px solid #777;
}

.focus {
    border-color: #2474b8;
}

.input mark {
    background: #1874cc;
    color: #fff;
}

.combo {
    display: flex;
    align-items: center;
    width: 293px;
    height: 21px;
    padding: 1px 3px 0;
    border: 1px solid #777;
}

.combo svg {
    width: 10px;
    height: 10px;
    margin-left: auto;
    color: #444;
}

.gray { border-color: #aaa; background: #e1e1e1; }
.hot { border-color: #3c78b4; background: #e2edf6; }
.dim { margin-left: 7px; border-color: #ccc; }
.dim.combo svg { color: #ccc; }
.end { margin-left: 7px; }
.w127 { width: 128px; }
.w75 { width: 75px; }

.swatch {
    width: 14px;
    height: 13px;
    margin-right: 7px;
    border: 1px solid #a33;
    background: #f00;
}

.line {
    width: 44px;
    margin-left: 3px;
    border-top: 1px solid #000;
}

.line.fat {
    width: 42px;
    margin-left: 5px;
    border-top-width: 3px;
    border-radius: 2px;
}

.dlg-btns {
    display: flex;
    justify-content: flex-end;
    gap: 7px;
    padding: 8px 11px 0 0;
}

.dlg-btns span {
    width: 73px;
    height: 21px;
    padding-right: 2px;
    border: 1px solid #adadad;
    background: #e1e1e1;
    line-height: 20px;
    text-align: center;
}

.dlg-btns .ok {
    border: 2px solid #2474b8;
    line-height: 18px;
}

.sizer {
    position: absolute;
    right: 1px;
    bottom: 1px;
}

.pointer {
    position: absolute;
    left: 813px;
    top: 237px;
}
```

FILE: script.js
```js
const NS = 'http://www.w3.org/2000/svg';

// one entry per day: top,bottom[,f = filled][,high][,low]; a single number is a flat day
const left = `597,603 592,598 585,592 583,586 576,583 567,576 567,572,f,565 572,578,f 577,579,f 577,586,f
582,586 575,582 575,575,f,572 575,579,f 579 579 579,583,f 583,585,f 585,588,f 587
588 588 587 586 586 586 586 585 576,586 571,576
562,571 551,562 542,551,h,540 542,542,f,540,543 529,542 514,529 515,515,f,512,518 515,520,f 520,528,f 525,528,h,523
525,530,f 522,530 522,524,f 520,524 512,520 505,512 505 505,507,f,501 500,507 495,500
495,506,f 503,506 503,507,f 507,514,f 510,513 502,510 502,504,f 497,504 490,497 476,490
472,476 453,470 445,453,h,441 445,453,f,445,457 445,450,h,442 445,447,f,443,449 438,446 425,438 415,425 413`;

const right = `412,422,f 419,422,h,417 419,429,f 429,441,f 430,440 421,430 422 420,423 419,420,f 419,420,f
419,420,f 421,422,f 422,424,f 424,425,f 427,435,f 434,441,f 441 442,451,f 450,456,f 450,456
446,450 447 444,449 437,445 436 435 434 434 436 436
433,436 428,434 425,429,h,422 425 426 426 426 424 423 422,422,f,418,424
423,434,f 433 433 432 432,437,f 437,440,f 440 439 439 440,447,f
444,447 444 443 443 444 445 447,448,f 449 449,450,f 448,450
442,447 427,440 422,427 421,423 421,427,f 425,427 425,427,f 427 427 427,433,f
432 432 427,432 418,427 418 413,418 408,413,h,406 404,408 394,404 387,394
386 383,385 378,383 367,378 367,367,f,363 364,367 359,364 359,359,f,359,363 353,359 343,353
339,343 339,339,f,338,342 322,337 320 320,326,f,320,329 313,326 313,313,f,306 313,318,f 314,317 310,315
299,310 283,299 278,283,h,271 268,278 255,268 257,280,f 280,303,f 293,303 293,300,f,290 299,315,f
305,315 292,303 292,295,f 289,294 289 289,292,f 282,293 282,282,f,280 282,286,f 275,286
259,275 256,259,h,253 256,263,f,256,266 255,263 248,255 248,248,f,248,252 240,249,h,233 238,240,h,232 239,239,f,239,241 230,239 229`;

const average = [
    [268, 614], [278, 607], [283, 604], [301, 597], [315, 590], [326, 584], [334, 581.5], [355, 581.5],
    [363, 583], [372, 583], [387, 577], [405, 564], [420, 554], [435, 540], [452, 523], [466, 515.5],
    [487, 510], [494, 506], [505, 497], [521, 482], [535, 467], [551, 435], [566, 413], [600, 370],
    [700, 370], [746, 413], [762, 423], [773, 431], [787, 434], [800, 434], [817, 438], [832, 438],
    [842, 437], [853, 433], [867, 430], [893, 431], [907, 434], [930, 441], [939, 441.5], [957, 439],
    [983, 435], [1002, 427.5], [1015, 418], [1030, 408], [1047, 394], [1057, 383], [1070, 367], [1087, 348],
    [1098, 336], [1113, 318], [1127, 307], [1140, 301], [1168, 290], [1178, 284], [1185, 282], [1197, 280.5],
    [1208, 272], [1215, 265]
];

function add(parent, tag, attrs, text) {
    const el = document.createElementNS(NS, tag);
    for (const k in attrs) el.setAttribute(k, attrs[k]);
    if (text) el.textContent = text;
    parent.appendChild(el);
}

function drawCandles(data, first) {
    const g = document.getElementById('candles');
    data.split(/\s+/).forEach((item, i) => {
        const p = item.split(',');
        const x = 254.5 + 4 * (first + i);
        const top = +p[0];
        const bottom = +(p[1] || p[0]);
        const high = +(p[3] || top);
        const low = +(p[4] || bottom);
        add(g, 'path', { d: `M${x} ${high}V${low + 1}`, stroke: '#000' });
        add(g, 'rect', {
            x: x - 1, y: top + .5, width: 2, height: Math.max(bottom - top, 1),
            fill: p[2] === 'f' ? '#000' : '#fff', stroke: '#000'
        });
    });
}

// smooth line through all points
function curve(pts) {
    let d = `M${pts[0]}`;
    for (let i = 0; i < pts.length - 1; i++) {
        const a = pts[i - 1] || pts[i];
        const b = pts[i];
        const c = pts[i + 1];
        const e = pts[i + 2] || c;
        d += `C${b[0] + (c[0] - a[0]) / 6} ${b[1] + (c[1] - a[1]) / 6} ${c[0] - (e[0] - b[0]) / 6} ${c[1] - (e[1] - b[1]) / 6} ${c[0]} ${c[1]}`;
    }
    return d;
}

drawCandles('602,611', -1);
drawCandles(left, 0);
drawCandles(right, 110);
document.getElementById('average').setAttribute('d', curve(average));

const axis = document.getElementById('axis');

for (let i = 0; i < 16; i++) {
    const y = 102.5 + 32 * i;
    add(axis, 'path', { d: `M1216 ${y}h4`, stroke: '#000' });
    add(axis, 'text', { class: 'ax', x: 1220.5, y: y + 3.5, textLength: 43, lengthAdjust: 'spacingAndGlyphs' }, (278425 - 11235 * i) + '.00');
}

const dates = [
    ['17 Jun 2018', 49], ['10 Jul 2018', 46], ['31 Jul 2018', 46], ['25 Aug 2018', 53],
    ['16 Sep 2018', 51], ['9 Oct 2018', 45], ['3 Nov 2018', 49], ['27 Nov 2018', 54],
    ['19 Dec 2018', 51], ['12 Jan 2019', 49], ['3 Feb 2019', 46], ['27 Feb 2019', 52],
    ['26 Mar 2019', 52], ['23 Apr 2019', 51], ['18 May 2019', 54], ['12 Jun 2019', 49]
];

dates.forEach(([text, w], i) => {
    const x = 250.5 + 64 * i;
    if (i < 15) add(axis, 'path', { d: `M${x} 615v3`, stroke: '#000' });
    add(axis, 'text', { class: 'ax', x: x, y: 627, textLength: w, lengthAdjust: 'spacingAndGlyphs' }, text);
});
```
